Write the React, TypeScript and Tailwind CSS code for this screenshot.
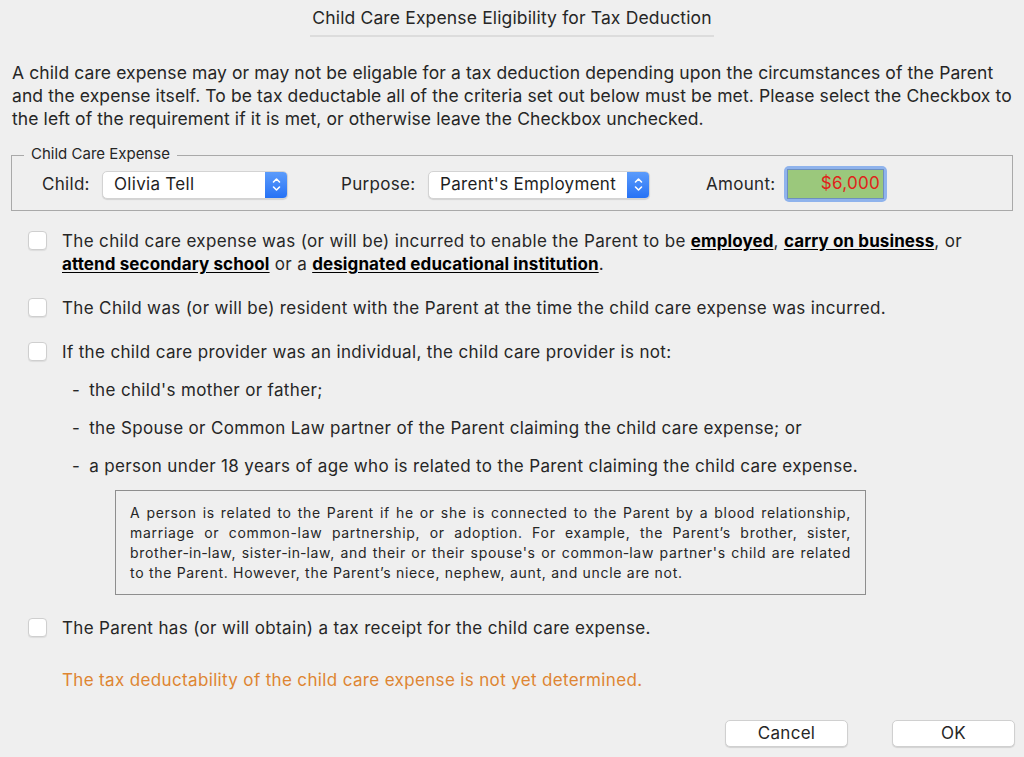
export default function App() {
  const font = { fontFamily: "Inter, 'Liberation Sans', sans-serif" };
  return (
    <div className="h-[757px] w-[1024px] overflow-hidden bg-[#efefef] text-[#262626]" style={font}>
      {/* Title */}
      <div className="flex flex-col items-center pt-[7px]">
        <div className="text-[17.5px] leading-[22px] tracking-[0.15px]">Child Care Expense Eligibility for Tax Deduction</div>
        <div className="mt-[6px] h-[2px] w-[404px] bg-[#dcdcdc]" />
      </div>

      {/* Intro */}
      <p className="mt-[24px] pl-[12px] pr-[4px] text-[17.5px] leading-[23px] tracking-[0.1px]">
        A child care expense may or may not be eligable for a tax deduction depending upon the circumstances of the Parent and the expense itself. To be tax deductable all of the criteria set out below must be met. Please select the Checkbox to the left of the requirement if it is met, or otherwise leave the Checkbox unchecked.
      </p>

      {/* Group box */}
      <div className="relative mx-[11px] mt-[25px] h-[56px] border border-[#a9a9a9]">
        <div className="absolute left-[12px] top-[-11px] bg-[#efefef] px-[7px] text-[15px] leading-[18px]">Child Care Expense</div>
        <div className="flex items-center pl-[30px] pt-[11px] text-[17px] tracking-[0.3px]">
          <span className="w-[60px]">Child:</span>
          <Popup className="w-[186px]" value="Olivia Tell" />
          <span className="ml-[53px] w-[87px]">Purpose:</span>
          <Popup className="w-[222px]" value="Parent's Employment" />
          <span className="ml-[56px] w-[78px]">Amount:</span>
          <div className="-mt-[1px] rounded-[5px] bg-[#8fb3ec] p-[3px]">
            <div className="flex h-[30px] w-[97px] items-center justify-end border border-[#6d8fbf] bg-[#9bc87c] pr-[3px] text-[#e0231b]">
              $6,000
            </div>
          </div>
        </div>
      </div>

      {/* Criteria */}
      <div className="mt-[19px] pl-[28px] pr-[8px] text-[17px] leading-[23px] tracking-[0.35px]">
        <Item>
          The child care expense was (or will be) incurred to enable the Parent to be <Link>employed</Link>, <Link>carry on business</Link>, or <Link>attend secondary school</Link> or a <Link>designated educational institution</Link>.
        </Item>
        <div className="mt-[21px]">
          <Item>The Child was (or will be) resident with the Parent at the time the child care expense was incurred.</Item>
        </div>
        <div className="mt-[21px]">
          <Item>If the child care provider was an individual, the child care provider is not:</Item>
        </div>
        <ul className="mt-[15px] flex flex-col gap-[15px] pl-[44px]">
          <li className="flex gap-[9px]"><span>-</span><span>the child's mother or father;</span></li>
          <li className="flex gap-[9px]"><span>-</span><span>the Spouse or Common Law partner of the Parent claiming the child care expense; or</span></li>
          <li className="flex gap-[9px]"><span>-</span><span>a person under 18 years of age who is related to the Parent claiming the child care expense.</span></li>
        </ul>
        <div className="ml-[87px] mt-[12px] w-[751px] border border-[#8e8e8e] px-[14px] pb-[11px] pt-[12px] text-justify text-[14px] leading-[20px] tracking-[0.7px]">
          A person is related to the Parent if he or she is connected to the Parent by a blood relationship, marriage or common-law partnership, or adoption. For example, the Parent’s brother, sister, brother‑in‑law, sister‑in‑law, and their or their spouse's or common‑law partner's child are related to the Parent. However, the Parent’s niece, nephew, aunt, and uncle are not.
        </div>
        <div className="mt-[22px]">
          <Item>The Parent has (or will obtain) a tax receipt for the child care expense.</Item>
        </div>
        <div className="mt-[29px] pl-[34px] text-[#de8532]">
          The tax deductability of the child care expense is not yet determined.
        </div>
      </div>

      {/* Buttons */}
      <div className="mt-[28px] flex justify-end gap-[44px] pr-[9px]">
        <Button>Cancel</Button>
        <Button>OK</Button>
      </div>
    </div>
  );
}

function Item({ children }: { children: React.ReactNode }) {
  return (
    <div className="flex items-start gap-[15px]">
      <div className="mt-[1px] h-[19px] w-[19px] shrink-0 rounded-[4px] border border-[#cfcfcf] bg-white shadow-[0_1px_1px_rgba(0,0,0,0.08)]" />
      <div>{children}</div>
    </div>
  );
}

function Link({ children }: { children: React.ReactNode }) {
  return <span className="font-bold tracking-[0.1px] text-black underline underline-offset-2">{children}</span>;
}

function Popup({ value, className }: { value: string; className: string }) {
  return (
    <div
      className={
        "flex h-[28px] items-stretch overflow-hidden rounded-[5px] border border-[#d3d3d3] bg-white shadow-[0_1px_1px_rgba(0,0,0,0.12)] " +
        className
      }
    >
      <div className="flex flex-1 items-center pl-[11px] text-[#1f1f1f]">{value}</div>
      <div className="flex w-[22px] items-center justify-center bg-gradient-to-b from-[#5b9bfb] to-[#2672f5]">
        <svg width="9" height="15" viewBox="0 0 9 15" fill="none" stroke="white" strokeWidth="1.6" strokeLinecap="round" strokeLinejoin="round">
          <path d="M1.5 5 L4.5 2 L7.5 5" />
          <path d="M1.5 10 L4.5 13 L7.5 10" />
        </svg>
      </div>
    </div>
  );
}

function Button({ children }: { children: React.ReactNode }) {
  return (
    <button className="h-[27px] w-[123px] rounded-[5px] border border-[#d0d0d0] bg-white text-[17px] tracking-[0.3px] text-[#262626] shadow-[0_1px_1px_rgba(0,0,0,0.12)]">
      {children}
    </button>
  );
}
